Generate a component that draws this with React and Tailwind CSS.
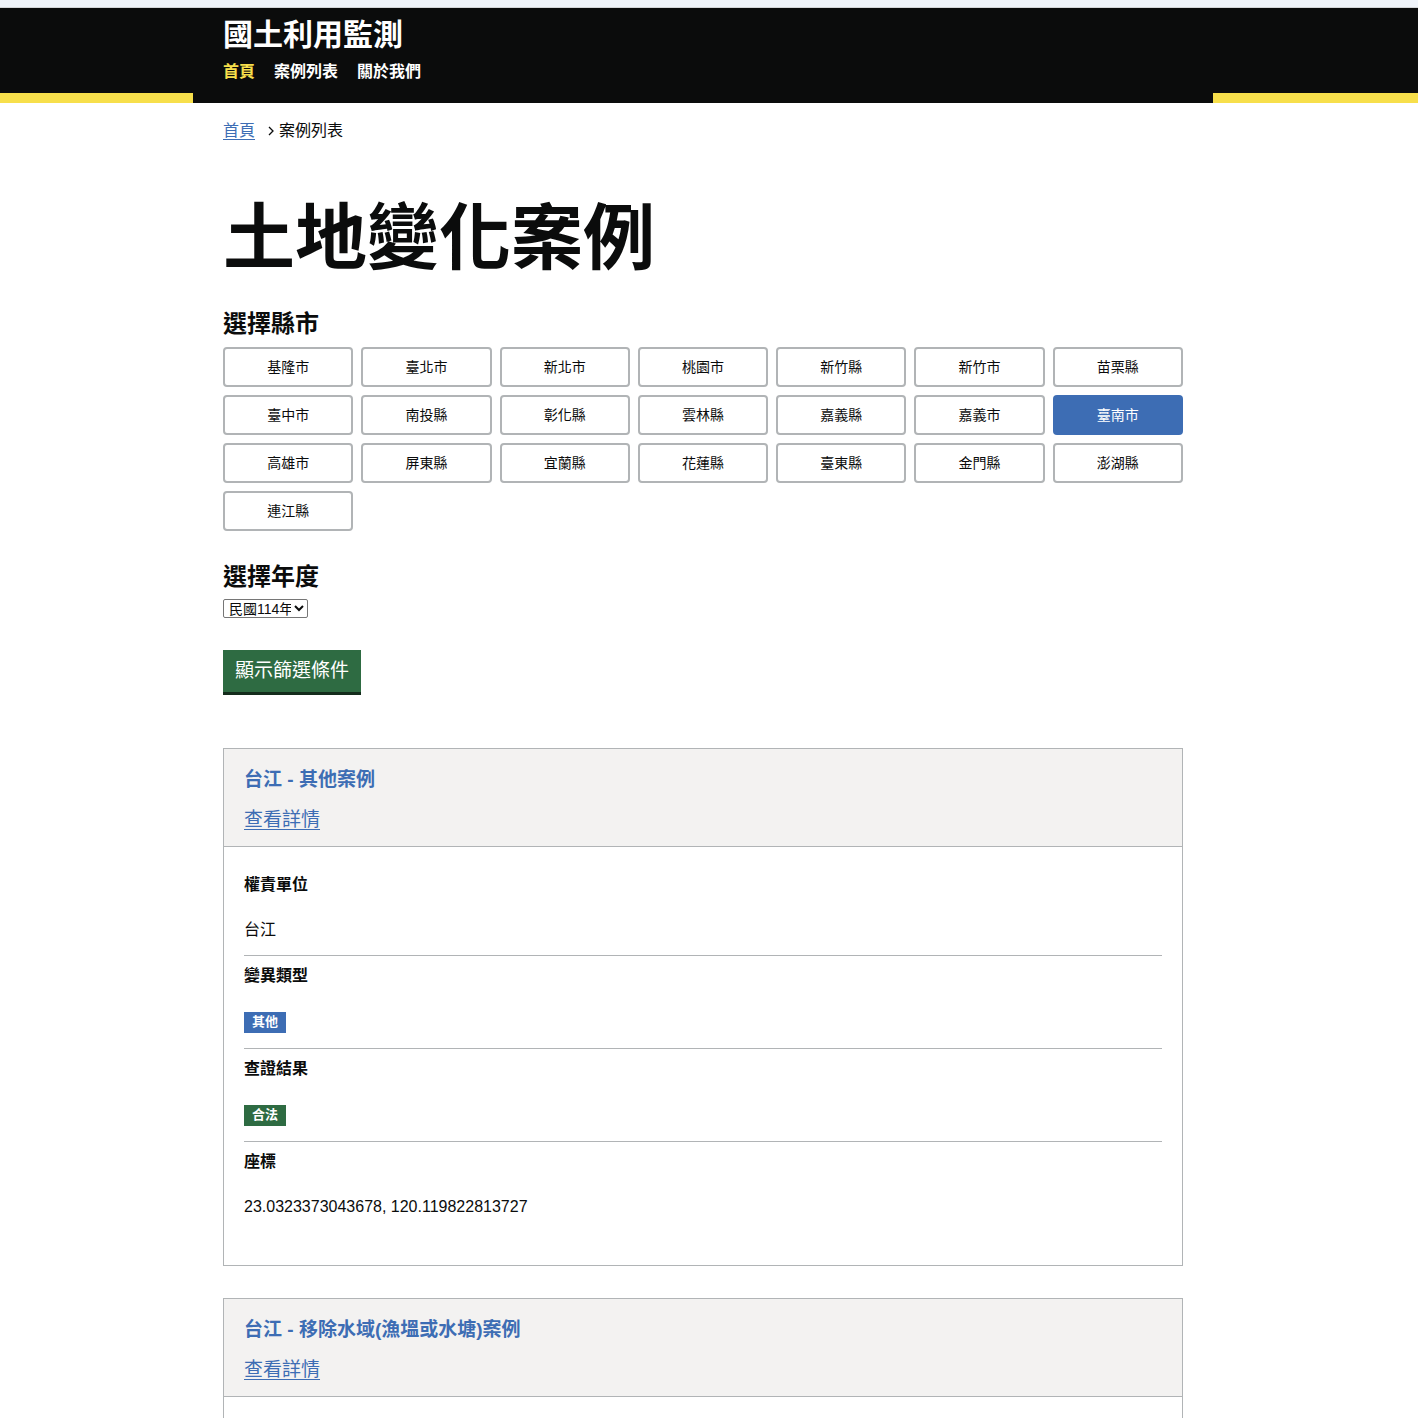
import React from "react";

const FONT = { fontFamily: '"Liberation Sans", "Noto Sans CJK TC", sans-serif' };

const counties = [
  "基隆市", "臺北市", "新北市", "桃園市", "新竹縣", "新竹市", "苗栗縣",
  "臺中市", "南投縣", "彰化縣", "雲林縣", "嘉義縣", "嘉義市", "臺南市",
  "高雄市", "屏東縣", "宜蘭縣", "花蓮縣", "臺東縣", "金門縣", "澎湖縣",
  "連江縣",
];

const Field = ({ label, children, first, last, tag }) => (
  <div className={`${first ? "" : "border-t border-[#b1b4b6]"}`}>
    <div className="pt-[8px] text-[16px] leading-[24px] font-bold">{label}</div>
    <div
      className={`mt-[21px] h-6 flex items-center ${
        last ? "mb-[46px]" : tag ? "mb-[15px]" : "mb-[13px]"
      }`}
    >
      {children}
    </div>
  </div>
);

const Tag = ({ children, color }) => (
  <span className={`inline-flex items-center h-[21px] px-[8px] text-[13px] font-bold text-white ${color} mt-[2px]`}>
    {children}
  </span>
);

const CaseCard = ({ title, children }) => (
  <div className="border border-[#b1b4b6] mb-[32px]">
    <div className="bg-[#f3f2f1] border-b border-[#b1b4b6] px-5 pt-[18px] pb-[13px]">
      <div className="text-[19px] leading-[26px] font-bold text-[#3d6db4]">{title}</div>
      <a href="#" className="block mt-[14px] text-[19px] leading-[26px] text-[#3d6db4] underline underline-offset-[3px] w-fit">
        查看詳情
      </a>
    </div>
    {children}
  </div>
);

export default function App() {
  return (
    <div className="min-h-screen bg-white text-[#0b0c0c]" style={FONT}>
      <div className="h-[8px] bg-[#f0f4fa] border-b border-[#d4d6d8]" />
      <header className="flex bg-[#0b0c0c] h-[95px]">
        <div className="w-[193px] flex flex-col justify-end">
          <div className="h-[10px] bg-[#f7df4b]" />
        </div>
        <div className="w-[1020px] px-[30px] pt-[7px]">
          <div className="text-[30px] leading-[40px] font-bold text-white">國土利用監測</div>
          <nav className="flex gap-[19px] mt-[5px] text-[16px] leading-[24px] font-bold">
            <a href="#" className="text-[#f7df4b]">首頁</a>
            <a href="#" className="text-white">案例列表</a>
            <a href="#" className="text-white">關於我們</a>
          </nav>
        </div>
        <div className="flex-1 flex flex-col justify-end">
          <div className="h-[10px] bg-[#f7df4b]" />
        </div>
      </header>

      <main className="ml-[193px] w-[1020px] px-[30px]">
        <div className="flex items-center pt-[16px] text-[16px] leading-[24px]">
          <a href="#" className="text-[#3d6db4] underline underline-offset-[3px]">首頁</a>
          <svg width="8" height="10" viewBox="0 0 8 10" className="ml-[12px] mr-[4px]">
            <path d="M2 1l4 4-4 4" fill="none" stroke="#0b0c0c" strokeWidth="1.3" />
          </svg>
          <span>案例列表</span>
        </div>

        <h1 className="mt-[50px] text-[72px] leading-[90px] font-bold">土地變化案例</h1>

        <h2 className="mt-[26px] text-[24px] leading-[30px] font-bold">選擇縣市</h2>
        <div className="grid grid-cols-7 gap-2 mt-[8px]">
          {counties.map((c) => (
            <button
              key={c}
              className={`h-[40px] rounded-[4px] text-[14px] pt-[1px] ${
                c === "臺南市"
                  ? "bg-[#3d6db4] text-white"
                  : "bg-white border-2 border-[#b1b4b6] text-[#0b0c0c]"
              }`}
            >
              {c}
            </button>
          ))}
        </div>

        <h2 className="mt-[31px] text-[24px] leading-[30px] font-bold">選擇年度</h2>
        <select className="mt-[7px] h-[19px] w-[85px] border border-[#767676] rounded-[2px] text-[14px] leading-[17px] pl-[1px]">
          <option>民國114年</option>
        </select>

        <div className="mt-[29px]">
          <button className="h-[45px] px-[12px] bg-[#2e6b42] border-b-[3px] border-[#142c1c] text-white text-[19px]">
            顯示篩選條件
          </button>
        </div>

        <div className="mt-[53px]">
          <CaseCard title="台江 - 其他案例">
            <div className="px-5 pt-[18px]">
              <Field label="權責單位" first>
                <span className="text-[16px]">台江</span>
              </Field>
              <Field label="變異類型" tag>
                <Tag color="bg-[#3d6db4]">其他</Tag>
              </Field>
              <Field label="查證結果" tag>
                <Tag color="bg-[#2e6b42]">合法</Tag>
              </Field>
              <Field label="座標" last>
                <span className="text-[16px]">23.0323373043678, 120.119822813727</span>
              </Field>
            </div>
          </CaseCard>
          <CaseCard title="台江 - 移除水域(漁塭或水塘)案例">
            <div className="px-5 pt-[18px]">
              <Field label="權責單位" first>
                <span className="text-[16px]">台江</span>
              </Field>
            </div>
          </CaseCard>
        </div>
      </main>
    </div>
  );
}
